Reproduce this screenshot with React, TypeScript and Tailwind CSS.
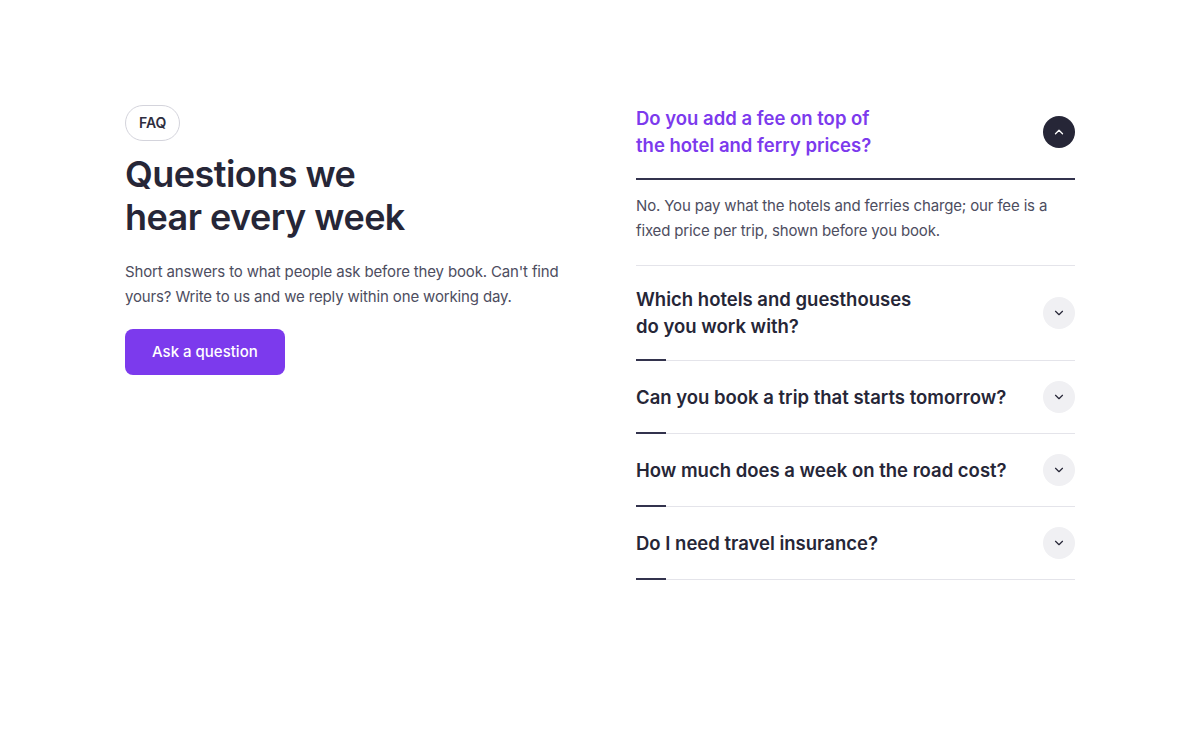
import { useState } from 'react';
import { ChevronDown, ChevronUp } from 'lucide-react';

const faqs = [
  {
    q: 'Do you add a fee on top of the hotel and ferry prices?',
    a: 'No. You pay what the hotels and ferries charge; our fee is a fixed price per trip, shown before you book.',
  },
  {
    q: 'Which hotels and guesthouses do you work with?',
    a: 'Small, family-run places we have stayed in ourselves, from island guesthouses to a few city hotels.',
  },
  {
    q: 'Can you book a trip that starts tomorrow?',
    a: 'Often, yes. Ferries in high season fill up, so the sooner you write, the more we can do.',
  },
  {
    q: 'How much does a week on the road cost?',
    a: 'It depends on the season and the route; most of our week-long trips land in the middle of the range.',
  },
  {
    q: 'Do I need travel insurance?',
    a: 'We strongly recommend it. We can point you to a few policies that cover ferry delays.',
  },
];

function FaqItem({
  q,
  a,
  open,
  onToggle,
}: {
  q: string;
  a: string;
  open: boolean;
  onToggle: () => void;
}) {
  return (
    <div className="border-b border-[#e4e4ea]">
      <button
        onClick={onToggle}
        className="relative w-full flex items-center justify-between gap-6 py-5 text-left"
      >
        <span
          className={`text-[18.5px] leading-[27px] font-semibold text-balance ${
            open ? 'text-[#7c3aed]' : 'text-[#262637]'
          }`}
        >
          {q}
        </span>
        <span
          className={`w-8 h-8 shrink-0 rounded-full flex items-center justify-center ${
            open ? 'bg-[#262637] text-white' : 'bg-[#f0f0f3] text-[#262637]'
          }`}
        >
          {open ? <ChevronUp size={14} strokeWidth={2.25} /> : <ChevronDown size={14} strokeWidth={2} />}
        </span>
        <span
          className={`absolute left-0 -bottom-px h-[2px] bg-[#33334d] ${open ? 'w-full' : 'w-[30px]'}`}
        />
      </button>
      {open && (
        <p className="pt-[14px] pb-[22px] text-[15px] leading-[25px] tracking-[-0.01em] text-[#4d4d60]">
          {a}
        </p>
      )}
    </div>
  );
}

export default function App() {
  const [openIdx, setOpenIdx] = useState(0);

  return (
    <div className="min-h-screen bg-white font-['Inter',sans-serif]">
      <div className="max-w-[950px] mx-auto pt-[85px] grid grid-cols-2 gap-[72px] items-start">
        <div className="pt-5">
          <span className="inline-flex items-center h-9 px-[13px] rounded-full border border-[#d4d4dc] text-sm font-semibold text-[#2e2e40]">
            FAQ
          </span>
          <h2 className="mt-3 text-[36px] leading-[43px] font-semibold tracking-[-0.015em] text-[#262637]">
            Questions we
            <br />
            hear every week
          </h2>
          <p className="mt-5 text-[15px] leading-[25px] tracking-[-0.01em] text-[#4d4d60]">
            Short answers to what people ask before they book. Can't find yours? Write to us and we reply
            within one working day.
          </p>
          <button className="mt-5 h-[46px] px-[27px] rounded-lg bg-[#7c3aed] text-white text-[15px] font-medium">
            Ask a question
          </button>
        </div>

        <div>
          {faqs.map((f, i) => (
            <FaqItem
              key={f.q}
              q={f.q}
              a={f.a}
              open={openIdx === i}
              onToggle={() => setOpenIdx(openIdx === i ? -1 : i)}
            />
          ))}
        </div>
      </div>
    </div>
  );
}
